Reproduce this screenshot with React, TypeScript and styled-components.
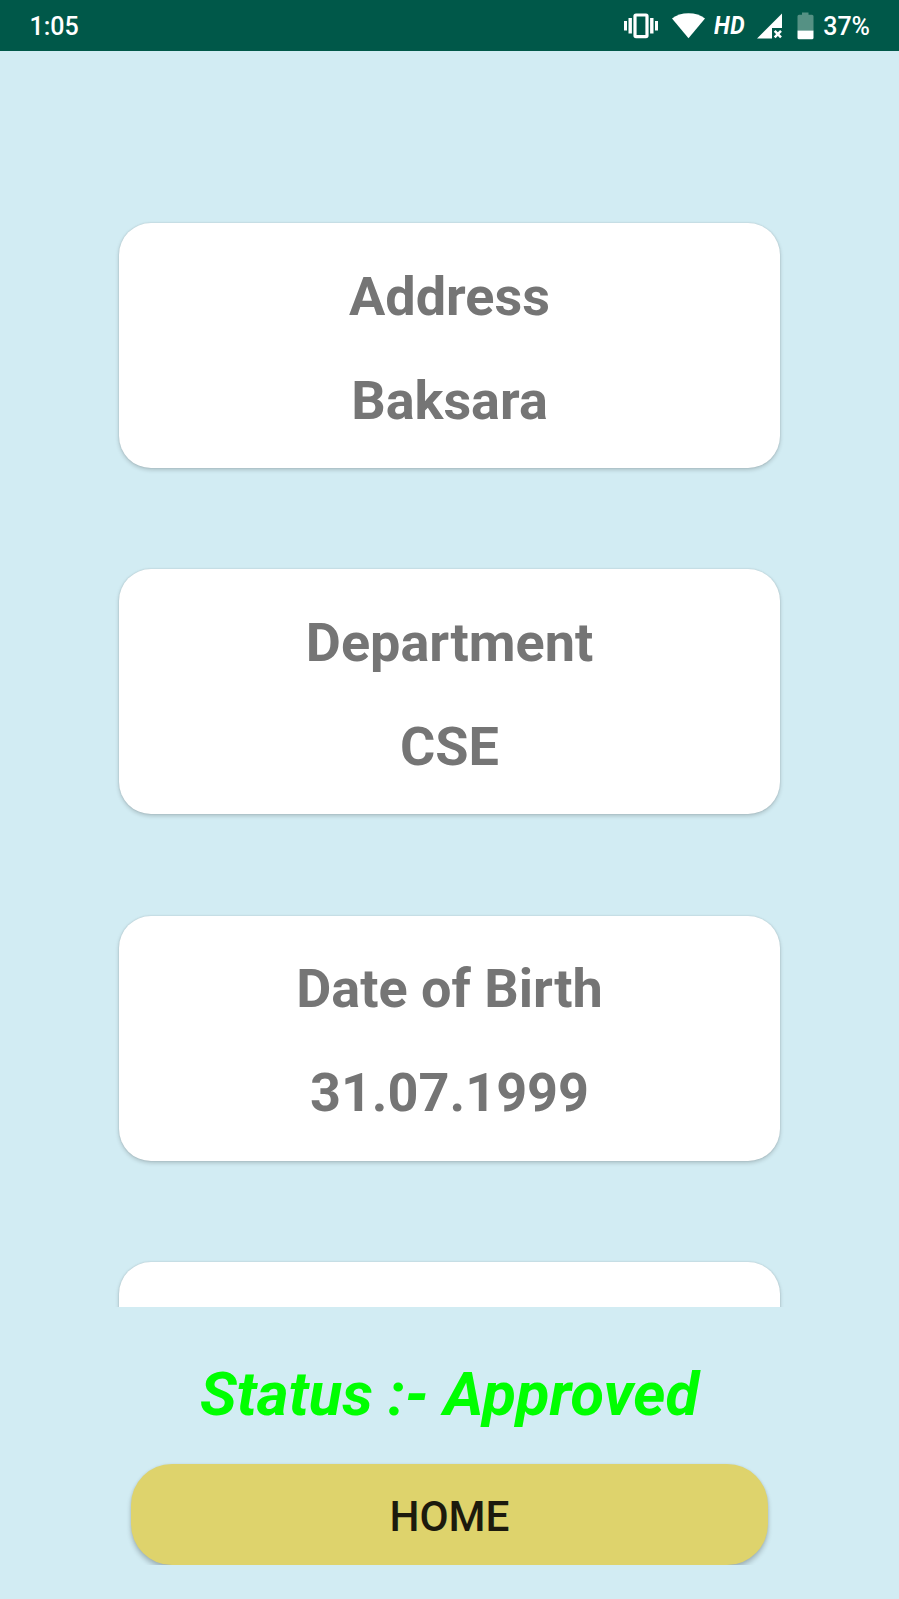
import React from 'react';
import styled, { createGlobalStyle } from 'styled-components';

const GlobalStyle = createGlobalStyle`
  * { box-sizing: border-box; }
  body {
    margin: 0;
    background: #d2ecf3;
    font-family: Roboto, 'Liberation Sans', sans-serif;
  }
`;

const Screen = styled.div`
  width: 899px;
  height: 1599px;
  display: flex;
  flex-direction: column;
  overflow: hidden;
  background: #d2ecf3;
`;

const StatusBar = styled.header`
  flex: none;
  height: 51px;
  padding: 0 29px 0 29.5px;
  display: flex;
  align-items: center;
  justify-content: space-between;
  background: #005849;
  color: #fff;
`;

const BarText = styled.span`
  font-size: 25px;
  font-weight: 500;
  line-height: 29px;
  padding-top: 1px;
`;

const NetworkLabel = styled.span`
  width: 32px;
  margin: 0 11px 1px 8.5px;
  font-size: 26px;
  font-weight: 700;
  font-style: italic;
  line-height: 29px;
  letter-spacing: 0.6px;
  white-space: nowrap;
  transform: scaleX(0.88);
  transform-origin: left;
`;

const Tray = styled.div`
  display: flex;
  align-items: center;

  svg { display: block; flex: none; }
`;

const Records = styled.main`
  flex: none;
  height: 1256px;
  padding-top: 172px;
  display: flex;
  flex-direction: column;
  align-items: center;
  gap: 101.4px;
  overflow: hidden;
`;

const Card = styled.section`
  flex: none;
  width: 661px;
  height: 245px;
  padding-top: 41.5px;
  display: flex;
  flex-direction: column;
  align-items: center;
  gap: 40px;
  border-radius: 32px;
  background: #fff;
  box-shadow: 0 2px 4px rgba(0, 0, 0, 0.18), 0 0 2px rgba(0, 0, 0, 0.14);
`;

const CardText = styled.div`
  color: #757575;
  font-size: 54px;
  font-weight: 700;
  line-height: 64px;
  white-space: nowrap;
`;

const Footer = styled.footer`
  flex: 1;
  display: flex;
  flex-direction: column;
  align-items: center;
  padding-top: 51px;
`;

const ApprovalStatus = styled.div`
  color: #00ff00;
  font-size: 61.4px;
  font-weight: 700;
  font-style: italic;
  line-height: 72px;
  white-space: nowrap;
`;

const ButtonClip = styled.div`
  width: 100%;
  height: 116px;
  margin-top: 19px;
  padding-top: 15px;
  display: flex;
  justify-content: center;
  overflow: hidden;
`;

const HomeButton = styled.button`
  width: 637px;
  height: 100.5px;
  padding: 5px 0 0;
  border: 0;
  border-radius: 41px;
  background: #ded36c;
  color: #1c1a0d;
  font-family: inherit;
  font-size: 42.3px;
  font-weight: 500;
  line-height: 50px;
  box-shadow: 0 4px 5px rgba(0, 0, 0, 0.22), 0 0 3px rgba(0, 0, 0, 0.08);
`;

const VibrateIcon = () => (
  <svg width="35" height="26" viewBox="0 0 35 26" fill="#fff">
    <path d="M0 8h3v9.500H0zM4.500 5h3.400v15.500H4.500zM26.100 5h3.400v15.500h-3.400zM31 8h3v9.500h-3z" />
    <rect x="11" y="2" width="12" height="21.600" rx="1" fill="none" stroke="#fff" strokeWidth="3.200" />
  </svg>
);

const WifiIcon = () => (
  <svg width="33" height="26" viewBox="0 0 33 26" fill="#fff">
    <path d="M0 5.400C4.300 2 10 .2 16.500.2S28.700 2 33 5.400L16.500 25.300z" />
  </svg>
);

const SignalIcon = () => (
  <svg width="26" height="26" viewBox="0 0 26 26">
    <path d="M25 .5V15H15v10.500H0z" fill="#fff" />
    <path d="M17.700 17.800l6.300 6.500M24 17.800l-6.300 6.500" fill="none" stroke="#fff" strokeWidth="2.500" />
  </svg>
);

const BatteryIcon = () => (
  <svg width="17" height="28" viewBox="0 0 17 28">
    <path d="M5 .5h6.500v2.200H15q1.500 0 1.500 1.500V18.500H.5V4.200q0-1.500 1.500-1.500h3z" fill="#559184" />
    <path d="M.5 18.500h16v7.300q0 1.500-1.500 1.500H2q-1.500 0-1.500-1.500z" fill="#fff" />
  </svg>
);

const Spacer = styled.i<{ $w: number }>`
  flex: none;
  width: ${({ $w }) => $w}px;
`;

const records = [
  ['Address', 'Baksara'],
  ['Department', 'CSE'],
  ['Date of Birth', '31.07.1999'],
  [],
];

export default function App() {
  return (
    <Screen>
      <GlobalStyle />
      <StatusBar>
        <BarText>1:05</BarText>
        <Tray>
          <VibrateIcon />
          <Spacer $w={13} />
          <WifiIcon />
          <NetworkLabel>HD</NetworkLabel>
          <SignalIcon />
          <Spacer $w={14} />
          <BatteryIcon />
          <Spacer $w={9.5} />
          <BarText>37%</BarText>
        </Tray>
      </StatusBar>
      <Records>
        {records.map((lines, i) => (
          <Card key={i}>
            {lines.map((line) => (
              <CardText key={line}>{line}</CardText>
            ))}
          </Card>
        ))}
      </Records>
      <Footer>
        <ApprovalStatus>Status :- Approved</ApprovalStatus>
        <ButtonClip>
          <HomeButton>HOME</HomeButton>
        </ButtonClip>
      </Footer>
    </Screen>
  );
}
